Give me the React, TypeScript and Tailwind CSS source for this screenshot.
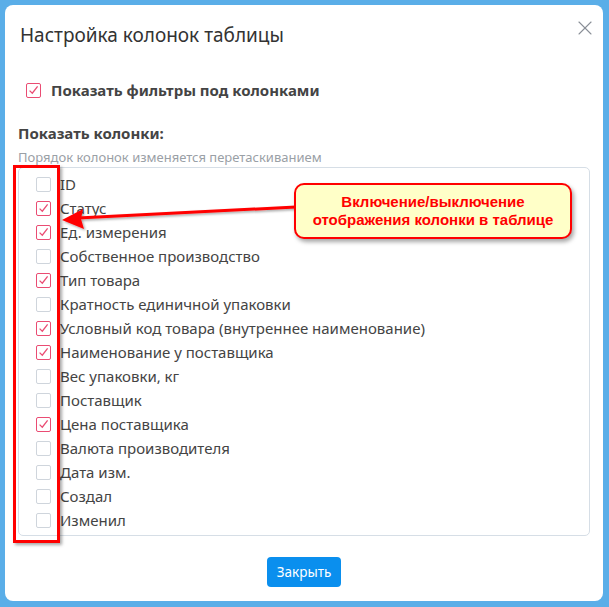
import { X } from 'lucide-react';

const COLUMNS: { label: string; on: boolean }[] = [
  { label: 'ID', on: false },
  { label: 'Статус', on: true },
  { label: 'Ед. измерения', on: true },
  { label: 'Собственное производство', on: false },
  { label: 'Тип товара', on: true },
  { label: 'Кратность единичной упаковки', on: false },
  { label: 'Условный код товара (внутреннее наименование)', on: true },
  { label: 'Наименование у поставщика', on: true },
  { label: 'Вес упаковки, кг', on: false },
  { label: 'Поставщик', on: false },
  { label: 'Цена поставщика', on: true },
  { label: 'Валюта производителя', on: false },
  { label: 'Дата изм.', on: false },
  { label: 'Создал', on: false },
  { label: 'Изменил', on: false },
];

function Check({ on }: { on: boolean }) {
  if (!on) {
    return <span className="block w-[15px] h-[15px] rounded-[2px] border border-[#cfd5dc] bg-white shrink-0" />;
  }
  return (
    <span className="flex items-center justify-center w-[15px] h-[15px] rounded-[2px] border border-[#ea4c73] bg-white shrink-0">
      <svg width="11" height="11" viewBox="0 0 11 11" fill="none">
        <path d="M1.6 5.6 L4.3 8.2 L9.6 1.4" stroke="#ea4c73" strokeWidth="1.3" />
      </svg>
    </span>
  );
}

export default function App() {
  return (
    <div className="relative w-[609px] h-[607px] bg-[#5aaee8] p-[5px] overflow-hidden" style={{ fontFamily: '"Noto Sans", "Open Sans", sans-serif' }}>
      <div className="relative w-[598px] h-[596px] bg-white rounded-[8px] px-[13px] pt-[16px]">
        <div className="flex items-center justify-between h-[28px]">
          <h2 className="ml-[2px] text-[19px] text-[#333] leading-[28px]">Настройка колонок таблицы</h2>
          <X className="w-[24px] h-[24px] text-[#8a8f97] mr-[-7px] mb-[14px]" strokeWidth={1.1} />
        </div>

        <label className="flex items-center gap-[10px] mt-[32px] ml-[8px] h-[18px]">
          <Check on />
          <span className="text-[15px] font-bold text-[#444]">Показать фильтры под колонками</span>
        </label>

        <div className="mt-[24px] text-[15px] font-bold text-[#444] leading-[20px]">Показать колонки:</div>
        <div className="mt-[5px] text-[13px] text-[#9aa0a6] leading-[18px]">Порядок колонок изменяется перетаскиванием</div>

        <div className="mt-[1px] w-[572px] h-[369px] rounded-[5px] border border-[#d6dee6] pt-[4px] pl-[17px]">
          {COLUMNS.map(c => (
            <div key={c.label} className="flex items-center gap-[9px] h-[24px]">
              <Check on={c.on} />
              <span className="text-[15px] text-[#444] leading-[24px]">{c.label}</span>
            </div>
          ))}
        </div>

        <div className="flex justify-center mt-[21px]">
          <button className="w-[74px] h-[30px] rounded-[4px] bg-[#0a8fee] text-white text-[13.5px]">Закрыть</button>
        </div>
      </div>

      {/* annotation: red frame around the checkboxes */}
      <div className="absolute left-[13px] top-[165px] w-[47px] h-[378px] border-[3px] border-[#ff0000] shadow-[2px_2px_3px_rgba(0,0,0,0.35)]" />

      {/* annotation: arrow */}
      <svg className="absolute left-0 top-0" width="609" height="607" viewBox="0 0 609 607">
        <defs>
          <filter id="sh" x="-10%" y="-50%" width="120%" height="200%">
            <feDropShadow dx="1.5" dy="1.5" stdDeviation="1" floodColor="#000" floodOpacity="0.35" />
          </filter>
        </defs>
        <g filter="url(#sh)">
          <path d="M296 207 L78 218" stroke="#ff0000" strokeWidth="3" />
          <path d="M62 220 L83 209 L81 219 L84 229 Z" fill="#ff0000" />
        </g>
      </svg>

      {/* annotation: callout */}
      <div
        className="absolute left-[294px] top-[183px] w-[278px] h-[56px] rounded-[10px] border-2 border-[#ff0000] bg-[#ffffc8] shadow-[2px_3px_4px_rgba(0,0,0,0.35)] flex flex-col items-center justify-center"
        style={{ fontFamily: '"Liberation Sans", Arial, sans-serif' }}
      >
        <span className="text-[15px] font-bold text-[#f00] leading-[18px]">Включение/выключение</span>
        <span className="text-[15px] font-bold text-[#f00] leading-[18px]">отображения колонки в таблице</span>
      </div>
    </div>
  );
}
